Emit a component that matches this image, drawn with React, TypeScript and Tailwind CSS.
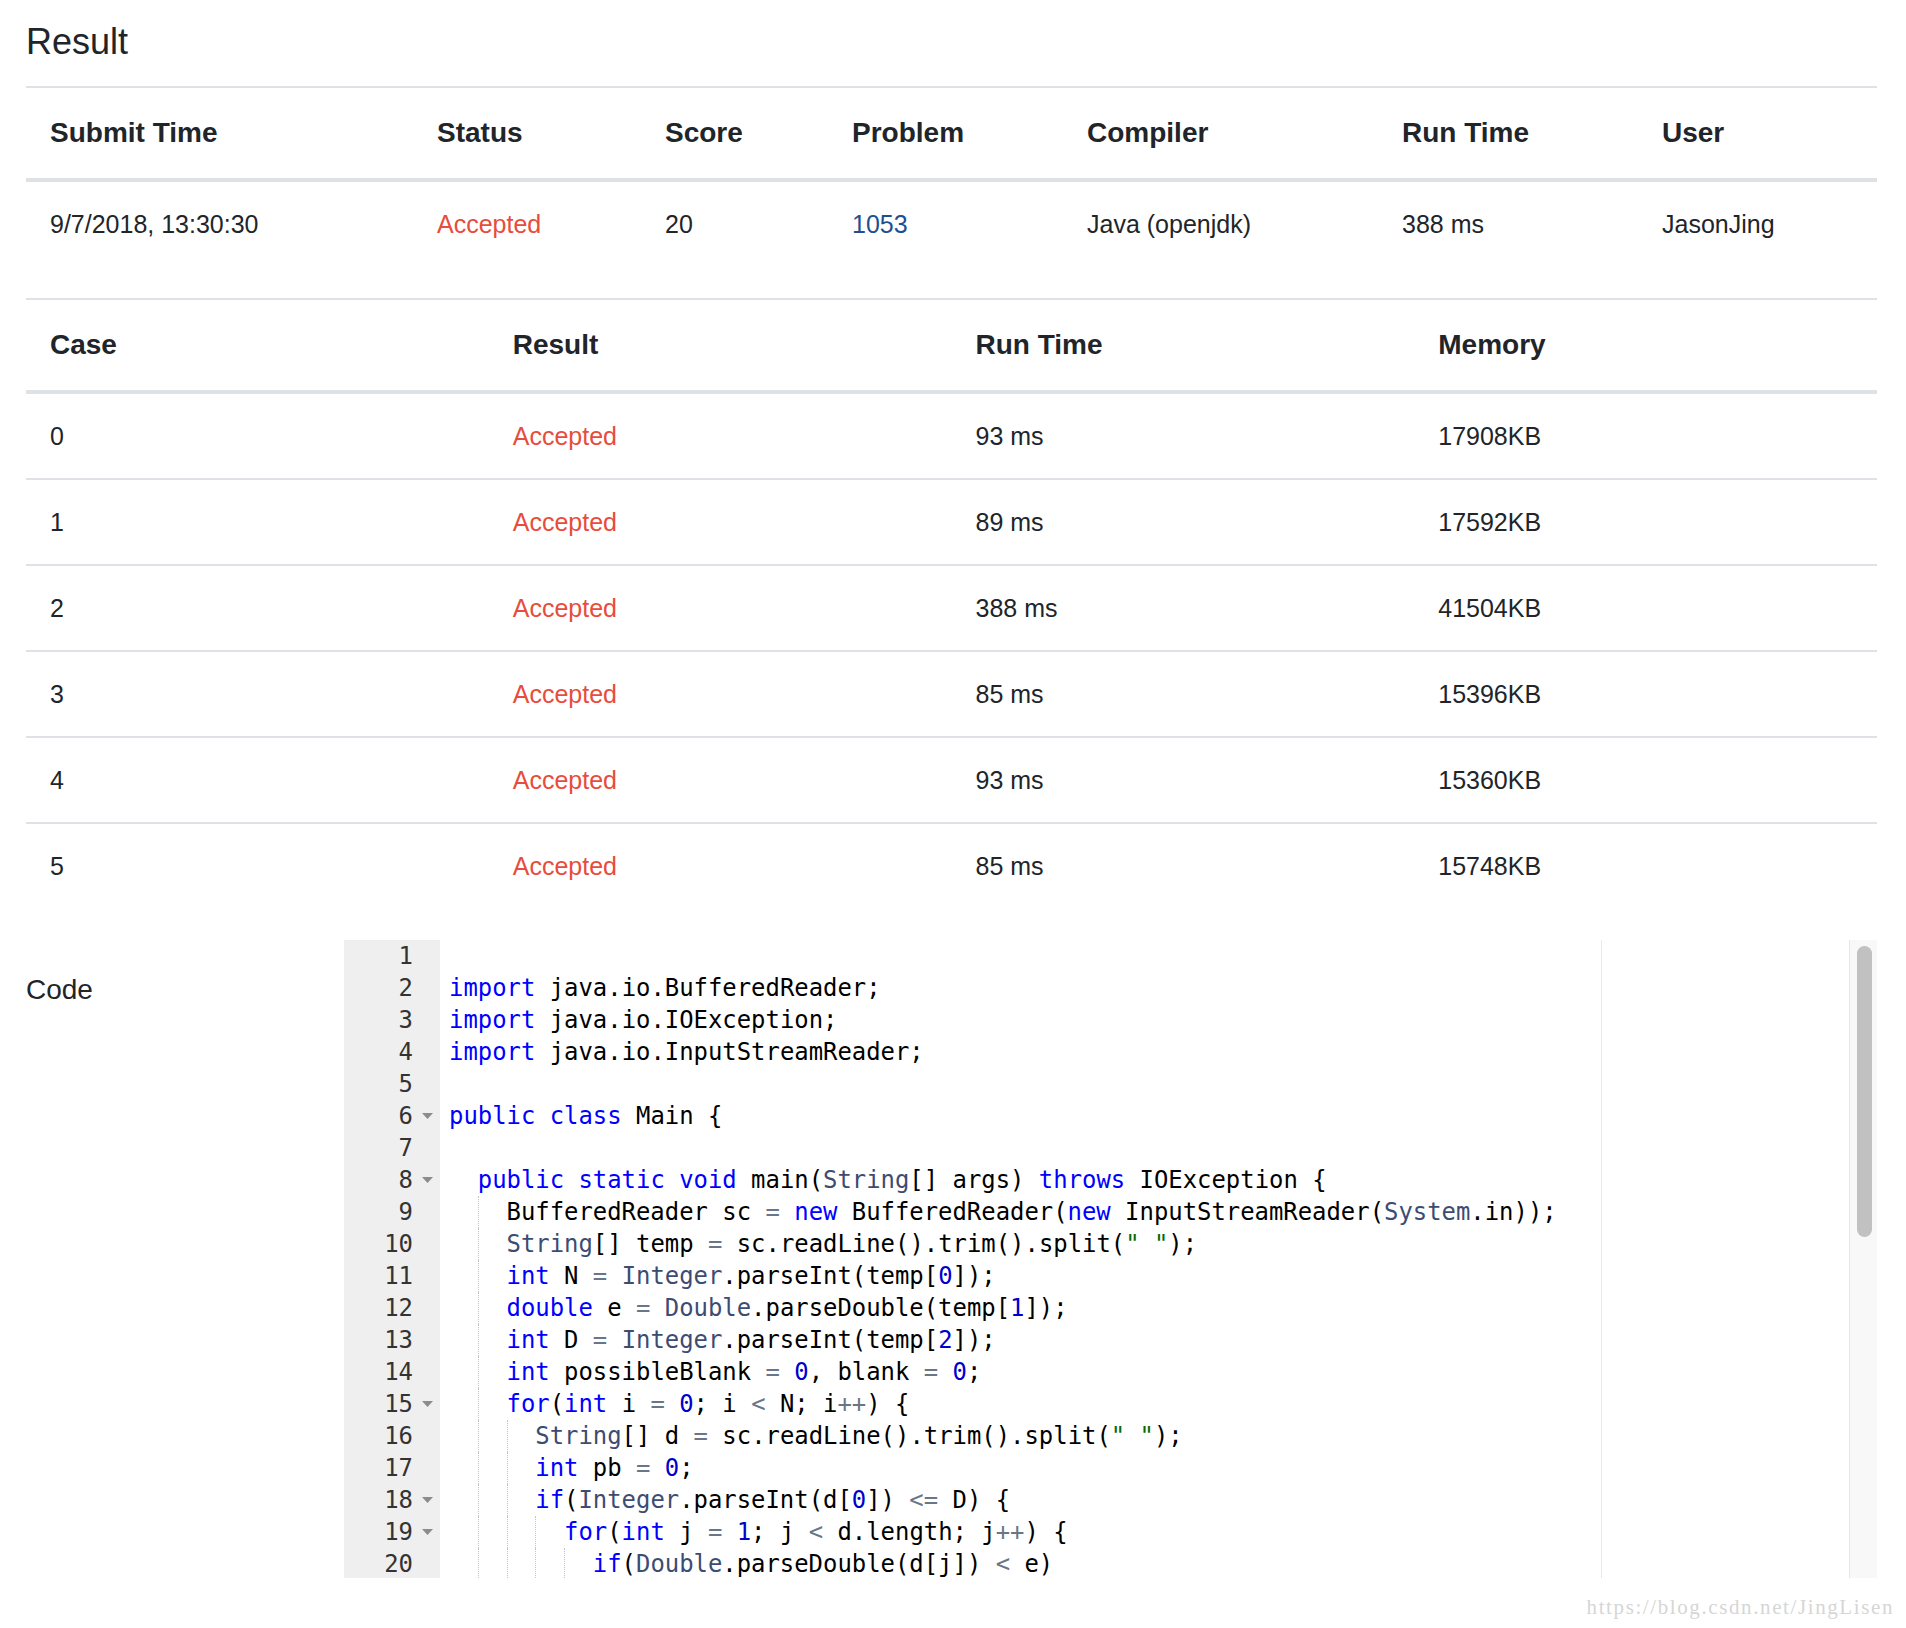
const summaryCols = [
  'Submit Time',
  'Status',
  'Score',
  'Problem',
  'Compiler',
  'Run Time',
  'User',
];

const cases = [
  { id: 0, time: '93 ms', memory: '17908KB' },
  { id: 1, time: '89 ms', memory: '17592KB' },
  { id: 2, time: '388 ms', memory: '41504KB' },
  { id: 3, time: '85 ms', memory: '15396KB' },
  { id: 4, time: '93 ms', memory: '15360KB' },
  { id: 5, time: '85 ms', memory: '15748KB' },
];

const codeLines = [
  '',
  'import java.io.BufferedReader;',
  'import java.io.IOException;',
  'import java.io.InputStreamReader;',
  '',
  'public class Main {',
  '',
  '  public static void main(String[] args) throws IOException {',
  '    BufferedReader sc = new BufferedReader(new InputStreamReader(System.in));',
  '    String[] temp = sc.readLine().trim().split(" ");',
  '    int N = Integer.parseInt(temp[0]);',
  '    double e = Double.parseDouble(temp[1]);',
  '    int D = Integer.parseInt(temp[2]);',
  '    int possibleBlank = 0, blank = 0;',
  '    for(int i = 0; i < N; i++) {',
  '      String[] d = sc.readLine().trim().split(" ");',
  '      int pb = 0;',
  '      if(Integer.parseInt(d[0]) <= D) {',
  '        for(int j = 1; j < d.length; j++) {',
  '          if(Double.parseDouble(d[j]) < e)',
];

const folds = [6, 8, 15, 18, 19];

const keywords = new Set([
  'import', 'public', 'class', 'static', 'void', 'throws', 'new',
  'int', 'double', 'for', 'if',
]);
const types = new Set(['String', 'Integer', 'Double', 'System']);

// tiny java highlighter, textmate-ish colours
function tokenize(src: string) {
  const out: { text: string; cls: string }[] = [];
  const re = /("[^"]*")|(\b\d+\b)|([A-Za-z_]\w*)|(<=|\+\+|[=<])|(\s+)|(.)/g;
  let m: RegExpExecArray | null;
  while ((m = re.exec(src))) {
    if (m[1]) out.push({ text: m[1], cls: 'text-[#036a07]' });
    else if (m[2]) out.push({ text: m[2], cls: 'text-[#0000cd]' });
    else if (m[3]) {
      if (keywords.has(m[3])) out.push({ text: m[3], cls: 'text-[#0000ff]' });
      else if (types.has(m[3])) out.push({ text: m[3], cls: 'text-[#3c4c72]' });
      else out.push({ text: m[3], cls: '' });
    } else if (m[4]) out.push({ text: m[4], cls: 'text-[#687687]' });
    else out.push({ text: m[0], cls: '' });
  }
  return out;
}

function FoldArrow() {
  return (
    <svg width="11" height="6" viewBox="0 0 11 6">
      <polygon points="0,0 11,0 5.5,6" fill="#8c8c8c" />
    </svg>
  );
}

function CodeLine({ line }: { line: string }) {
  const indent = line.length - line.trimStart().length;
  const chunks = Math.floor(indent / 2);
  const rest = line.slice(chunks * 2);
  return (
    <div className="h-[32px] leading-[32px] whitespace-pre">
      {Array.from({ length: chunks }).map((_, i) => (
        <span
          key={i}
          className={
            i === 0
              ? 'inline-block w-[2ch] h-[32px] align-top'
              : 'inline-block w-[2ch] h-[32px] align-top border-l border-dotted border-[#c4c4c4]'
          }
        />
      ))}
      {tokenize(rest).map((t, i) => (
        <span key={i} className={t.cls}>
          {t.text}
        </span>
      ))}
    </div>
  );
}

export default function App() {
  return (
    <div className="w-[1906px] min-h-[1628px] bg-white text-[#212529] font-['Liberation_Sans',Arial,sans-serif]">
      <h1 className="pl-[26px] pt-[22px] text-[36px] leading-[40px] font-normal">
        Result
      </h1>

      <div className="ml-[26px] w-[1851px]">
        {/* submission summary */}
        <div className="mt-[24px]">
          <div className="grid grid-cols-[387px_228px_187px_235px_315px_260px_239px] h-[96px] items-center border-t-2 border-b-4 border-[#dee2e6] text-[28px] leading-[32px] font-bold">
            {summaryCols.map((c) => (
              <div key={c} className="px-[24px]">
                {c}
              </div>
            ))}
          </div>
          <div className="grid grid-cols-[387px_228px_187px_235px_315px_260px_239px] h-[84px] items-center text-[25px] leading-[30px]">
            <div className="px-[24px]">9/7/2018, 13:30:30</div>
            <div className="px-[24px] text-[#e74c3c]">Accepted</div>
            <div className="px-[24px]">20</div>
            <div className="px-[24px] text-[#1d4f91]">1053</div>
            <div className="px-[24px]">Java (openjdk)</div>
            <div className="px-[24px]">388 ms</div>
            <div className="px-[24px]">JasonJing</div>
          </div>
        </div>

        {/* test cases */}
        <div className="mt-[32px]">
          <div className="grid grid-cols-4 h-[96px] items-center border-t-2 border-b-4 border-[#dee2e6] text-[28px] leading-[32px] font-bold">
            <div className="px-[24px]">Case</div>
            <div className="px-[24px]">Result</div>
            <div className="px-[24px]">Run Time</div>
            <div className="px-[24px]">Memory</div>
          </div>
          {cases.map((c) => (
            <div
              key={c.id}
              className={
                c.id === 0
                  ? 'grid grid-cols-4 h-[84px] items-center text-[25px] leading-[30px]'
                  : 'grid grid-cols-4 h-[86px] items-center border-t-2 border-[#dee2e6] text-[25px] leading-[30px]'
              }
            >
              <div className="px-[24px]">{c.id}</div>
              <div className="px-[24px] text-[#e74c3c]">Accepted</div>
              <div className="px-[24px]">{c.time}</div>
              <div className="px-[24px]">{c.memory}</div>
            </div>
          ))}
        </div>

        {/* code */}
        <div className="mt-[32px] flex">
          <div className="w-[318px] shrink-0 pt-[34px] text-[28px] leading-[32px]">
            Code
          </div>
          <div className="flex w-[1533px] h-[638px] overflow-hidden font-['DejaVu_Sans_Mono',monospace] text-[23.9px] text-black">
            <div className="w-[96px] shrink-0 bg-[#efefef] pr-[5px] text-[#333]">
              {codeLines.map((_, i) => (
                <div key={i} className="flex h-[32px] items-center">
                  <span className="flex-1 text-right pr-[6px] leading-[32px]">
                    {i + 1}
                  </span>
                  <span className="w-[16px] flex justify-center">
                    {folds.includes(i + 1) && <FoldArrow />}
                  </span>
                </div>
              ))}
            </div>
            <div className="w-[1161px] shrink-0 pl-[9px]">
              {codeLines.map((l, i) => (
                <CodeLine key={i} line={l} />
              ))}
            </div>
            <div className="flex-1 border-l border-[#e8e8e8]" />
            <div className="w-[28px] shrink-0 bg-[#f8f8f8] border-l border-[#e6e6e6] pt-[6px] pl-[7px]">
              <div className="w-[15px] h-[291px] rounded-full bg-[#c1c1c1]" />
            </div>
          </div>
        </div>
      </div>

      <div className="pr-[12px] pt-[17px] text-right text-[21px] leading-[24px] tracking-[1.6px] text-[#d6d6d6] font-['Liberation_Serif',serif]">
        https://blog.csdn.net/JingLisen
      </div>
    </div>
  );
}
